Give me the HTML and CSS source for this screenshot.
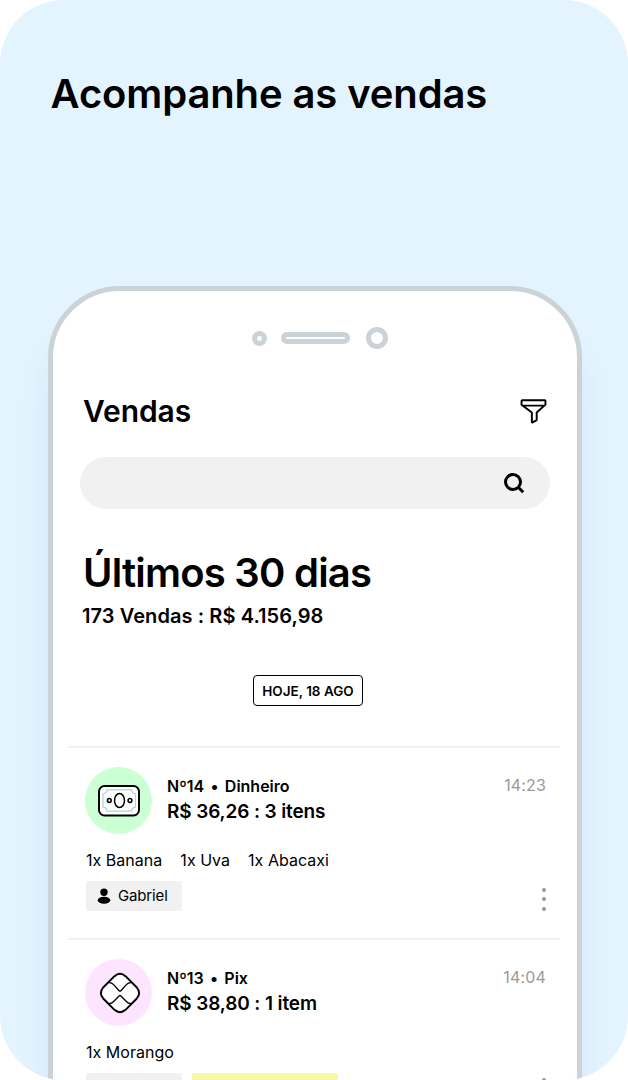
FILE: index.html
```html
<!DOCTYPE html>
<html lang="pt-BR">
<head>
    <meta charset="UTF-8">
    <title>Acompanhe as vendas</title>
    <link rel="stylesheet" href="styles.css">
</head>
<body>
    <div class="card">
        <h1 class="title">Acompanhe as vendas</h1>
        <div class="phone">
            <div class="speaker">
                <span class="sensor"></span>
                <span class="bar"></span>
                <span class="camera"></span>
            </div>
            <div class="header">
                <h2>Vendas</h2>
                <svg class="filter" width="27" height="27" viewBox="0 0 28 28" fill="none" stroke="#000" stroke-width="2" stroke-linejoin="round">
                    <path d="M2.400 2.300h23.200q.8 0 .8.8v3.800L17.300 15v7.200q0 .9-.7 1.200l-3.600 1.900q-.7.300-.7-.6V15L1.600 6.900V3.100q0-.8.8-.8zM1.800 7.900h24.400"/>
                </svg>
            </div>
            <div class="search">
                <svg width="22" height="22" viewBox="0 0 22 22" fill="none" stroke="#000" stroke-width="3">
                    <circle cx="10" cy="10" r="7.500"/>
                    <path d="M15 15l5.200 5.200"/>
                </svg>
            </div>
            <h2 class="period">Últimos 30 dias</h2>
            <p class="total">173 Vendas : R$ 4.156,98</p>
            <div class="day">HOJE, 18 AGO</div>
            <ul class="sales">
                <li class="sale">
                    <div class="top">
                        <div class="icon cash">
                            <svg width="44" height="34" viewBox="0 0 44 34" fill="none" stroke="#000">
                                <rect x="2" y="2" width="40" height="29.500" rx="5.500" fill="#fff" stroke-width="2"/>
                                <path d="M10 5.800h24.500q.3 3.800 4 4v13.400q-3.700.2-4 4H10q-.3-3.800-4-4V9.800q3.700-.2 4-4z" stroke="#a9d8dd" stroke-width="1.300"/>
                                <ellipse cx="22.500" cy="16.500" rx="5" ry="7" stroke-width="1.500"/>
                                <circle cx="12.300" cy="16.500" r="1.900" stroke-width="1.500"/>
                                <circle cx="33" cy="16.500" r="1.900" stroke-width="1.500"/>
                            </svg>
                        </div>
                        <div class="info">
                            <p class="number">Nº14 <span class="dot">•</span> Dinheiro</p>
                            <p class="price">R$ 36,26 : 3 itens</p>
                        </div>
                        <span class="time">14:23</span>
                    </div>
                    <div class="products"><span>1x Banana</span><span>1x Uva</span><span>1x Abacaxi</span></div>
                    <div class="bottom">
                        <div class="tag">
                            <svg width="14" height="16" viewBox="0 0 14 16"><circle cx="7" cy="4.300" r="3.700"/><ellipse cx="7" cy="12.200" rx="6.300" ry="3.500"/></svg>
                            <span>Gabriel</span>
                        </div>
                        <div class="more"><i></i><i></i><i></i></div>
                    </div>
                </li>
                <li class="sale">
                    <div class="top">
                        <div class="icon pix">
                            <svg width="42" height="42" viewBox="0 0 42 42" fill="none" stroke="#000">
                                <path d="M15.500 4.200q5.500-4.700 11 0L37.800 15.500q4.700 5.500 0 11L26.500 37.800q-5.500 4.700-11 0L4.200 26.500q-4.700-5.500 0-11z" fill="#fff" stroke-width="1.900"/>
                                <path d="M9.800 10.700q2.700-.2 4.600 1.700l5.700 6.300q.9 1 1.800 0l5.700-6.300q1.900-1.900 4.600-1.700M9.800 31.500q2.700.2 4.600-1.700l5.700-5.800q.9-1 1.800 0l5.700 5.800q1.900 1.900 4.600 1.700" stroke-width="1.300"/>
                            </svg>
                        </div>
                        <div class="info">
                            <p class="number">Nº13 <span class="dot">•</span> Pix</p>
                            <p class="price">R$ 38,80 : 1 item</p>
                        </div>
                        <span class="time">14:04</span>
                    </div>
                    <div class="products"><span>1x Morango</span></div>
                    <div class="bottom">
                        <div class="tag"></div>
                        <div class="tag note"></div>
                        <div class="more last"><i></i><i></i><i></i></div>
                    </div>
                </li>
            </ul>
        </div>
    </div>
</body>
</html>
```

FILE: styles.css
```css
*{
    margin: 0;
    padding: 0;
    box-sizing: border-box;
}
body{
    background: #fff;
    color: #000;
    font-family: Inter, "Liberation Sans", sans-serif;
}
.card{
    width: 628px;
    height: 1080px;
    padding-top: 70px;
    background: #e3f4ff;
    border-radius: 64px;
    overflow: hidden;
}
.title{
    margin-left: 50.5px;
    font-size: 40px;
    line-height: 48px;
    font-weight: 600;
    letter-spacing: -.12px;
    white-space: nowrap;
}
.phone{
    width: 534px;
    height: 900px;
    margin: 167.5px 0 0 48px;
    padding: 36.5px 17px 0 15px;
    background: #fff;
    border: 5px solid #cbd3d6;
    border-radius: 72px 72px 0 0;
    box-shadow: 0 42px 30px rgba(120, 120, 160, .11);
}
.speaker{
    display: flex;
    align-items: center;
    height: 22px;
    margin-left: 183.5px;
}
.speaker span{
    border: 5px solid #cbd3d6;
    border-radius: 50%;
}
.speaker .sensor{
    width: 15px;
    height: 15px;
}
.speaker .bar{
    width: 69px;
    height: 12px;
    margin: 0 16px 0 14px;
    border-radius: 6px;
}
.speaker .camera{
    width: 22px;
    height: 22px;
}
.header{
    display: flex;
    justify-content: space-between;
    align-items: center;
    height: 36px;
    margin: 44px 13.5px 0 15px;
}
.header h2{
    font-size: 30px;
    line-height: 36px;
    font-weight: 600;
    letter-spacing: -.1px;
}
.search{
    display: flex;
    align-items: center;
    justify-content: flex-end;
    width: 470px;
    height: 51.5px;
    margin: 28px 0 0 12px;
    padding-right: 25px;
    background: #f1f1f1;
    border-radius: 26px;
}
.period{
    margin: 40px 0 0 15px;
    font-size: 40px;
    line-height: 48px;
    font-weight: 600;
    letter-spacing: -.77px;
}
.total{
    margin: 7px 0 0 14px;
    font-size: 20px;
    line-height: 24px;
    font-weight: 600;
    letter-spacing: .08px;
}
.day{
    width: 110px;
    height: 31px;
    margin: 47px 0 0 185px;
    border: 1.5px solid #000;
    border-radius: 4px;
    font-size: 13.5px;
    line-height: 30px;
    font-weight: 600;
    text-align: center;
    white-space: nowrap;
}
.sales{
    width: 492px;
    margin-top: 40px;
    list-style: none;
}
.sale{
    height: 192px;
    padding: 19.5px 14px 0 17px;
    border-top: 2px solid #f1f1f1;
}
.top{
    display: flex;
    height: 67px;
}
.icon{
    display: flex;
    align-items: center;
    justify-content: center;
    width: 67px;
    height: 67px;
    border-radius: 50%;
}
.cash{
    background: #ccffd3;
}
.pix{
    padding-left: 2px;
    background: #fde5ff;
}
.info{
    flex: 1;
    margin-left: 15px;
    padding-top: 8.5px;
    font-weight: 600;
    white-space: nowrap;
}
.number{
    font-size: 16px;
    line-height: 20px;
}
.dot{
    margin: 0 2.3px;
}
.price{
    margin-top: 4.5px;
    font-size: 19px;
    line-height: 24px;
    letter-spacing: -.12px;
}
.time{
    padding-top: 7.5px;
    color: #999;
    font-size: 16px;
    line-height: 20px;
    letter-spacing: .15px;
}
.products{
    display: flex;
    gap: 18px;
    margin: 15.5px 0 0 1px;
    font-size: 16px;
    line-height: 20px;
    letter-spacing: .03px;
}
.bottom{
    display: flex;
    gap: 10px;
    margin: 11px 0 0 1px;
}
.tag{
    display: flex;
    align-items: center;
    gap: 7.5px;
    width: 96px;
    height: 30px;
    padding-left: 10.5px;
    background: #f1f1f1;
    border-radius: 2px;
    font-size: 15px;
    letter-spacing: -.15px;
}
.tag span{
    padding-bottom: 1px;
}
.note{
    width: 146px;
    background: #f8f7a8;
}
.more{
    display: flex;
    flex-direction: column;
    gap: 5.5px;
    margin-left: auto;
    padding-top: 7px;
}
.more i{
    width: 4px;
    height: 4px;
    background: #999;
    border-radius: 50%;
}
.last{
    padding-top: 5px;
}
```
